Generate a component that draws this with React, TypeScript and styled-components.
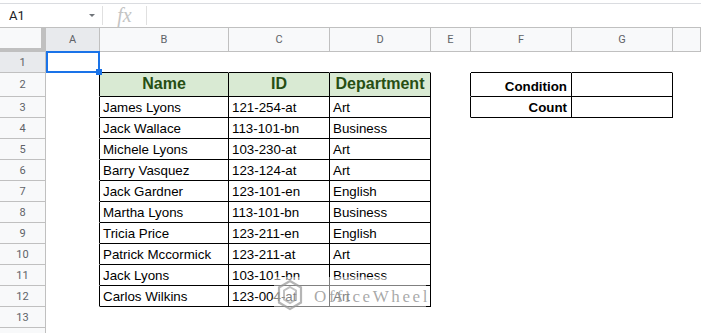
import React from "react";
import styled, { createGlobalStyle, css } from "styled-components";

const GlobalStyle = createGlobalStyle`
  html, body { margin: 0; padding: 0; background: #fff; overflow: hidden; }
  * { box-sizing: border-box; }
`;

const Page = styled.div`
  position: relative;
  width: 701px;
  height: 333px;
  overflow: hidden;
  background: #fff;
`;

const FormulaBar = styled.div`
  margin-top: 3px;
  height: 24px;
  border-top: 1px solid #dadce0;
  display: flex;
  align-items: center;
  font-family: Roboto, "Liberation Sans", sans-serif;
`;

const NameBox = styled.div`
  width: 102px;
  height: 100%;
  display: flex;
  align-items: center;
  justify-content: space-between;
  padding: 0 7px 0 9px;
  font-size: 13px;
  color: #202124;
`;

const Caret = styled.span`
  width: 0;
  height: 0;
  border-left: 3px solid transparent;
  border-right: 3px solid transparent;
  border-top: 3px solid #70757a;
`;

const Divider = styled.span`
  width: 1px;
  height: 19px;
  background: #e0e0e0;
`;

const FxLabel = styled.span`
  width: 43px;
  text-align: center;
  font-family: "Liberation Serif", "DejaVu Serif", serif;
  font-style: italic;
  font-size: 20px;
  color: #c4c4c4;
  line-height: 1;
  padding-bottom: 2px;
`;

const Sheet = styled.div`
  display: grid;
  grid-template-columns: 46px 54px 129px 101px 101px 40px 101px 101px 1fr;
  grid-template-rows: 25px 21px 24px repeat(10, 21px) 21px 21px;
`;

const Corner = styled.div`
  background: #f8f9fa;
  border-top: 1px solid #c0c0c0;
  border-right: 5px solid #c0c0c0;
  border-bottom: 4px solid #c0c0c0;
`;

const ColHeader = styled.div<{ $active?: boolean }>`
  background: ${(p) => (p.$active ? "#e8eaed" : "#f8f9fa")};
  border-top: 1px solid #c0c0c0;
  border-bottom: 1px solid #c0c0c0;
  border-right: 1px solid #c0c0c0;
  display: flex;
  align-items: center;
  justify-content: center;
  font-family: Roboto, "Liberation Sans", sans-serif;
  font-size: 11px;
  color: #5f6368;
`;

const RowHeader = styled.div<{ $active?: boolean }>`
  background: ${(p) => (p.$active ? "#e8eaed" : "#f8f9fa")};
  border-right: 1px solid #c0c0c0;
  border-bottom: 1px solid #c0c0c0;
  display: flex;
  align-items: center;
  justify-content: center;
  font-family: Roboto, "Liberation Sans", sans-serif;
  font-size: 11px;
  color: #5f6368;
`;

const Cell = styled.div<{
  $right: boolean;
  $bottom: boolean;
  $head?: boolean;
  $label?: boolean;
}>`
  position: relative;
  background: ${(p) => (p.$head ? "#d9ead3" : "#fff")};
  border-right: 1px solid ${(p) => (p.$right ? "#000" : "#fff")};
  border-bottom: 1px solid ${(p) => (p.$bottom ? "#000" : "#fff")};
  display: flex;
  align-items: flex-end;
  padding: 0 3px 2px 3px;
  font-family: Arial, "Liberation Sans", sans-serif;
  font-size: 13.33px;
  color: #000;
  white-space: nowrap;
  ${(p) =>
    p.$head &&
    css`
      justify-content: center;
      font-weight: bold;
      font-size: 16px;
      color: #274e13;
      padding-bottom: 3px;
    `}
  ${(p) =>
    p.$label &&
    css`
      justify-content: flex-end;
      font-weight: bold;
      padding-right: 4px;
    `}
`;

const Selection = styled.span`
  position: absolute;
  z-index: 3;
  top: -1px;
  left: 0;
  width: 54px;
  height: 22px;
  border: 2px solid #1a73e8;
  pointer-events: none;
`;

const Handle = styled.span`
  position: absolute;
  z-index: 4;
  left: 50px;
  top: 17px;
  width: 6px;
  height: 6px;
  background: #1a73e8;
`;

const Watermark = styled.div`
  position: absolute;
  z-index: 5;
  left: 274px;
  top: 277px;
  width: 152px;
  height: 36px;
  background: rgba(255, 255, 255, 0.5);
  display: flex;
  align-items: center;
  gap: 10px;
  padding-left: 2px;
  svg {
    flex-shrink: 0;
  }
`;

const WatermarkText = styled.span`
  font-family: "Liberation Serif", "DejaVu Serif", serif;
  font-size: 17px;
  letter-spacing: 2.6px;
  white-space: nowrap;
  color: rgba(140, 140, 140, 0.75);
  padding-top: 3px;
`;

const COLS = ["A", "B", "C", "D", "E", "F", "G", ""];

type Row = string[];
const data: Record<number, Row> = {
  2: ["", "Name", "ID", "Department", "", "Condition", "", ""],
  3: ["", "James Lyons", "121-254-at", "Art", "", "Count", "", ""],
  4: ["", "Jack Wallace", "113-101-bn", "Business", "", "", "", ""],
  5: ["", "Michele Lyons", "103-230-at", "Art", "", "", "", ""],
  6: ["", "Barry Vasquez", "123-124-at", "Art", "", "", "", ""],
  7: ["", "Jack Gardner", "123-101-en", "English", "", "", "", ""],
  8: ["", "Martha Lyons", "113-101-bn", "Business", "", "", "", ""],
  9: ["", "Tricia Price", "123-211-en", "English", "", "", "", ""],
  10: ["", "Patrick Mccormick", "123-211-at", "Art", "", "", "", ""],
  11: ["", "Jack Lyons", "103-101-bn", "Business", "", "", "", ""],
  12: ["", "Carlos Wilkins", "123-004-at", "Art", "", "", "", ""],
};

// c: 0=A ... 7=H
const rightBlack = (r: number, c: number) =>
  (r >= 2 && r <= 12 && c >= 0 && c <= 3) || (r >= 2 && r <= 3 && c >= 4 && c <= 6);
const bottomBlack = (r: number, c: number) =>
  (r >= 1 && r <= 12 && c >= 1 && c <= 3) || (r >= 1 && r <= 3 && c >= 5 && c <= 6);

const Logo = () => (
  <svg width="28" height="32" viewBox="0 0 28 32" fill="none">
    <path
      d="M14 2 L25 8.5 V23.5 L14 30 L3 23.5 V8.5 Z"
      stroke="rgba(150,150,150,0.7)"
      strokeWidth="2.2"
    />
    <path
      d="M14 8 L20 11.5 V20.5 L14 24 L8 20.5 V11.5 Z"
      stroke="rgba(150,150,150,0.6)"
      strokeWidth="2"
    />
  </svg>
);

export default function App() {
  const rows = Array.from({ length: 14 }, (_, i) => i + 1);
  return (
    <Page>
      <GlobalStyle />
      <FormulaBar>
        <NameBox>
          A1
          <Caret />
        </NameBox>
        <Divider />
        <FxLabel>fx</FxLabel>
        <Divider />
      </FormulaBar>
      <Sheet>
        <Corner />
        {COLS.map((c, i) => (
          <ColHeader key={"h" + i} $active={c === "A"}>
            {c}
          </ColHeader>
        ))}
        {rows.map((r) => (
          <React.Fragment key={r}>
            <RowHeader $active={r === 1}>{r <= 13 ? r : ""}</RowHeader>
            {COLS.map((_, c) => {
              const text = data[r]?.[c] ?? "";
              const head = r === 2 && c >= 1 && c <= 3;
              const label = (r === 2 || r === 3) && c === 5;
              return (
                <Cell
                  key={c}
                  $right={rightBlack(r, c)}
                  $bottom={bottomBlack(r, c)}
                  $head={head}
                  $label={label}
                >
                  {text}
                  {r === 1 && c === 0 && (
                    <>
                      <Selection />
                      <Handle />
                    </>
                  )}
                </Cell>
              );
            })}
          </React.Fragment>
        ))}
      </Sheet>
      <Watermark>
        <Logo />
        <WatermarkText>OfficeWheel</WatermarkText>
      </Watermark>
    </Page>
  );
}
